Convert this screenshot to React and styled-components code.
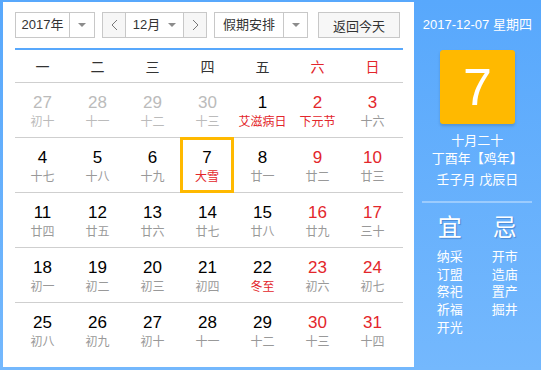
import React from "react";
import styled, { createGlobalStyle } from "styled-components";

const GlobalStyle = createGlobalStyle`
  html, body {
    margin: 0;
    padding: 0;
    background: #fff;
  }
  body {
    font-family: "Liberation Sans", "Noto Sans CJK SC", sans-serif;
  }
`;

const RED = "#e3262b";

const Wrapper = styled.div`
  display: flex;
  width: 541px;
  height: 370px;
  background: linear-gradient(to bottom, #58a8fc, #74b8fd);
`;

const Main = styled.div`
  width: 396px;
  margin: 2px 0 3px 3px;
  padding: 10px 11px 0 12px;
  background: #fff;
`;

const Toolbar = styled.div`
  display: flex;
  height: 26px;
  margin-bottom: 10px;
`;

const Select = styled.div`
  display: flex;
  width: ${(p) => p.w}px;
  height: 26px;
  box-sizing: border-box;
  border: 1px solid #c8c8c8;
  margin-right: ${(p) => p.gap || 0}px;
  font-size: 13px;
  color: #333;
`;

const SelectText = styled.div`
  flex: 1;
  display: flex;
  align-items: center;
  justify-content: center;
  line-height: 24px;
`;

const SelectArrow = styled.div`
  width: ${(p) => p.w}px;
  border-left: 1px solid #c8c8c8;
  display: flex;
  align-items: center;
  justify-content: center;
  &::after {
    content: "";
    border-left: 4px solid transparent;
    border-right: 4px solid transparent;
    border-top: 4px solid #8c8c8c;
  }
`;

const InlineArrow = styled.span`
  margin-left: 8px;
  border-left: 4px solid transparent;
  border-right: 4px solid transparent;
  border-top: 4px solid #8c8c8c;
`;

const NavButton = styled.div`
  width: 22px;
  background: #f6f6f6;
  display: flex;
  align-items: center;
  justify-content: center;
  border-${(p) => (p.side === "left" ? "right" : "left")}: 1px solid #c8c8c8;
`;

const TodayButton = styled.div`
  width: 82px;
  height: 26px;
  box-sizing: border-box;
  border: 1px solid #c8c8c8;
  background: #f7f7f7;
  font-size: 13px;
  color: #333;
  display: flex;
  align-items: center;
  justify-content: center;
`;

const WeekHeader = styled.div`
  display: grid;
  grid-template-columns: repeat(7, 55px);
  height: 32px;
  border-top: 2px solid #58a8fc;
  align-items: center;
  text-align: center;
  font-size: 14px;
  color: #333;
`;

const WeekDay = styled.div`
  color: ${(p) => (p.weekend ? RED : "#333")};
`;

const WeekRow = styled.div`
  display: grid;
  grid-template-columns: repeat(7, 55px);
  height: 54px;
  border-top: 1px solid #cfcfcf;
`;

const DayCell = styled.div`
  display: flex;
  flex-direction: column;
  align-items: center;
  box-sizing: border-box;
  padding-top: 10px;
  ${(p) =>
    p.selected &&
    `
    width: 54px;
    height: 56px;
    margin-top: -1px;
    padding-top: 8px;
    border: 3px solid #ffb900;
  `}
`;

const DayNum = styled.div`
  font-size: 17px;
  line-height: 20px;
  color: ${(p) => (p.other ? "#bbb" : p.weekend ? RED : "#000")};
`;

const Lunar = styled.div`
  font-size: 12px;
  line-height: 17px;
  margin-top: 1px;
  color: ${(p) => (p.other ? "#bbb" : p.red ? RED : "#999")};
`;

const Side = styled.div`
  width: 130px;
  display: flex;
  flex-direction: column;
  align-items: center;
  color: #fff;
  font-size: 13px;
`;

const DateLine = styled.div`
  margin-top: 16px;
  line-height: 18px;
`;

const BigDay = styled.div`
  margin-top: 16px;
  width: 75px;
  height: 74px;
  background: #ffb900;
  border-radius: 3px;
  box-shadow: 0 2px 3px rgba(0, 0, 0, 0.15);
  display: flex;
  align-items: center;
  justify-content: center;
  font-size: 52px;
  color: #fff;
`;

const InfoLine = styled.div`
  line-height: 18px;
  margin-top: ${(p) => p.mt || 0}px;
`;

const Divider = styled.div`
  width: 110px;
  height: 2px;
  margin-top: 12px;
  background: rgba(255, 255, 255, 0.35);
`;

const Almanac = styled.div`
  display: grid;
  grid-template-columns: 55px 55px;
  margin-top: 10px;
  text-align: center;
`;

const AlmanacTitle = styled.div`
  font-size: 24px;
  line-height: 30px;
  text-shadow: 1px 1px 1px rgba(0, 40, 120, 0.3);
  margin-bottom: 5px;
`;

const AlmanacItem = styled.div`
  font-size: 13px;
  line-height: 17.7px;
`;

const Chevron = ({ dir }) => (
  <svg width="7" height="12" viewBox="0 0 7 12">
    <polyline
      points={dir === "left" ? "6,1 1,6 6,11" : "1,1 6,6 1,11"}
      fill="none"
      stroke="#777"
      strokeWidth="1"
    />
  </svg>
);

const weekdays = ["一", "二", "三", "四", "五", "六", "日"];

const weeks = [
  [["27", "初十", "o"], ["28", "十一", "o"], ["29", "十二", "o"], ["30", "十三", "o"], ["1", "艾滋病日", "r"], ["2", "下元节", "r"], ["3", "十六"]],
  [["4", "十七"], ["5", "十八"], ["6", "十九"], ["7", "大雪", "rs"], ["8", "廿一"], ["9", "廿二"], ["10", "廿三"]],
  [["11", "廿四"], ["12", "廿五"], ["13", "廿六"], ["14", "廿七"], ["15", "廿八"], ["16", "廿九"], ["17", "三十"]],
  [["18", "初一"], ["19", "初二"], ["20", "初三"], ["21", "初四"], ["22", "冬至", "r"], ["23", "初六"], ["24", "初七"]],
  [["25", "初八"], ["26", "初九"], ["27", "初十"], ["28", "十一"], ["29", "十二"], ["30", "十三"], ["31", "十四"]],
];

const good = ["纳采", "订盟", "祭祀", "祈福", "开光"];
const bad = ["开市", "造庙", "置产", "掘井"];

export default function App() {
  return (
    <>
      <GlobalStyle />
      <Wrapper>
        <Main>
          <Toolbar>
            <Select w={80} gap={7}>
              <SelectText>2017年</SelectText>
              <SelectArrow w={24} />
            </Select>
            <Select w={105} gap={7}>
              <NavButton side="left">
                <Chevron dir="left" />
              </NavButton>
              <SelectText>
                12月
                <InlineArrow />
              </SelectText>
              <NavButton side="right">
                <Chevron dir="right" />
              </NavButton>
            </Select>
            <Select w={94} gap={10}>
              <SelectText>假期安排</SelectText>
              <SelectArrow w={23} />
            </Select>
            <TodayButton>返回今天</TodayButton>
          </Toolbar>

          <WeekHeader>
            {weekdays.map((d, i) => (
              <WeekDay key={d} weekend={i >= 5}>
                {d}
              </WeekDay>
            ))}
          </WeekHeader>

          {weeks.map((week, wi) => (
            <WeekRow key={wi}>
              {week.map(([num, lunar, flag = ""], di) => (
                <DayCell key={di} selected={flag.includes("s")}>
                  <DayNum other={flag === "o"} weekend={di >= 5}>
                    {num}
                  </DayNum>
                  <Lunar other={flag === "o"} red={flag.includes("r")}>
                    {lunar}
                  </Lunar>
                </DayCell>
              ))}
            </WeekRow>
          ))}
        </Main>

        <Side>
          <DateLine>2017-12-07 星期四</DateLine>
          <BigDay>7</BigDay>
          <InfoLine mt={8}>十月二十</InfoLine>
          <InfoLine>丁酉年【鸡年】</InfoLine>
          <InfoLine mt={3}>壬子月 戊辰日</InfoLine>
          <Divider />
          <Almanac>
            <div>
              <AlmanacTitle>宜</AlmanacTitle>
              {good.map((g) => (
                <AlmanacItem key={g}>{g}</AlmanacItem>
              ))}
            </div>
            <div>
              <AlmanacTitle>忌</AlmanacTitle>
              {bad.map((b) => (
                <AlmanacItem key={b}>{b}</AlmanacItem>
              ))}
            </div>
          </Almanac>
        </Side>
      </Wrapper>
    </>
  );
}
